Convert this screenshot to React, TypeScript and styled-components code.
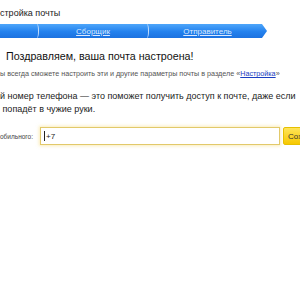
import React from 'react';
import styled, { createGlobalStyle } from 'styled-components';

const Global = createGlobalStyle`
    html, body {
        margin: 0;
        padding: 0;
        background: #fff;
        overflow: hidden;
    }
    body {
        font-family: "Liberation Sans", Arial, sans-serif;
        color: #222;
    }
`;

const Page = styled.div`
    width: 300px;
    height: 300px;
    overflow: hidden;
`;

const Title = styled.div`
    font-size: 9px;
    line-height: 12px;
    padding-top: 7px;
    color: #222;
    white-space: nowrap;
`;

const Steps = styled.nav`
    display: flex;
    width: 267px;
    height: 14px;
    margin-top: 5px;
    background: linear-gradient(#4ea6fa, #2381ee 55%, #1c72e0);
    clip-path: polygon(0 0, 262px 0, 267px 7px, 262px 14px, 0 14px);
`;

const Step = styled.div<{ $w: number; $last?: boolean }>`
    position: relative;
    width: ${(p) => p.$w}px;
    flex: none;
    display: flex;
    align-items: center;
    justify-content: center;

    ${(p) =>
        !p.$last &&
        `&::after {
            content: '';
            position: absolute;
            right: -1px;
            top: 0;
            width: 4px;
            height: 14px;
            box-sizing: border-box;
            border-right: 1px solid rgba(215, 233, 255, 0.9);
            border-radius: 0 50% 50% 0 / 0 50% 50% 0;
        }`}
`;

const StepLink = styled.a`
    font-size: 8px;
    color: #dbeaff;
    text-decoration: underline;
    white-space: nowrap;
`;

const Heading = styled.h1`
    margin: 11px 0 0 0;
    padding-left: 6px;
    font-size: 10.7px;
    font-weight: normal;
    line-height: 14px;
    color: #111;
    white-space: nowrap;
`;

const Hint = styled.p`
    margin: 6px 0 0 0;
    font-size: 7.2px;
    line-height: 10px;
    color: #555;
    white-space: nowrap;
`;

const HintLink = styled.a`
    color: #1a3dc1;
    text-decoration: underline;
`;

const Text = styled.p`
    margin: 11px 0 0 0;
    font-size: 9px;
    line-height: 13px;
    color: #222;
    white-space: nowrap;
`;

const FormRow = styled.div`
    display: flex;
    align-items: center;
    margin-top: 11px;
    height: 18px;
`;

const Label = styled.label`
    width: 40px;
    flex: none;
    font-size: 6.5px;
    color: #444;
    white-space: nowrap;
`;

const Input = styled.div`
    box-sizing: border-box;
    width: 240px;
    height: 18px;
    flex: none;
    border: 1px solid #e2c96a;
    box-shadow: 0 0 3px 1px rgba(248, 220, 120, 0.5);
    background: #fff;
    display: flex;
    align-items: center;
    padding-left: 3px;
    font-size: 8px;
    color: #222;
`;

const Caret = styled.span`
    display: inline-block;
    width: 1px;
    height: 10px;
    background: #222;
    margin-right: 1px;
`;

const Button = styled.button`
    margin-left: 3px;
    flex: none;
    height: 18px;
    padding: 0 3px 0 4px;
    border: 1px solid #e6c000;
    border-radius: 2px;
    background: linear-gradient(#ffe45a, #f7c800);
    font-family: inherit;
    font-size: 8px;
    color: #333;
    white-space: nowrap;
`;

export default function App() {
    return (
        <Page>
            <Global />
            <Title>стройка почты</Title>
            <Steps>
                <Step $w={38} />
                <Step $w={110}>
                    <StepLink>Сборщик</StepLink>
                </Step>
                <Step $w={119} $last>
                    <StepLink>Отправитель</StepLink>
                </Step>
            </Steps>
            <Heading>Поздравляем, ваша почта настроена!</Heading>
            <Hint>
                ы всегда сможете настроить эти и другие параметры почты в разделе «<HintLink>Настройка</HintLink>»
            </Hint>
            <Text>
                й номер телефона — это поможет получить доступ к почте, даже если
                <br />
                &nbsp;попадёт в чужие руки.
            </Text>
            <FormRow>
                <Label>обильного:</Label>
                <Input>
                    <Caret />+7
                </Input>
                <Button>Сохранить</Button>
            </FormRow>
        </Page>
    );
}
